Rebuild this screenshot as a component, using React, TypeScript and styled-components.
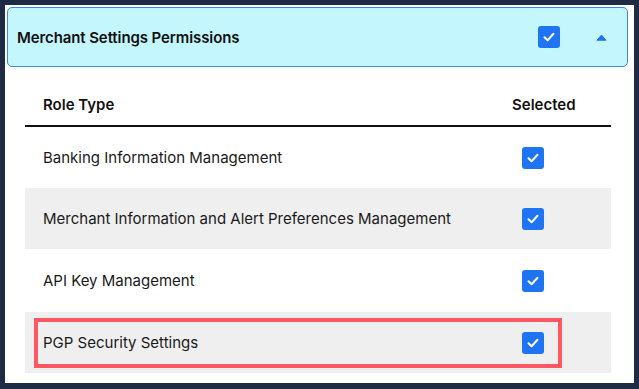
import React from "react";
import styled, { createGlobalStyle } from "styled-components";

const Global = createGlobalStyle`
  html, body { margin: 0; padding: 0; background: #1f2a45; }
  body { font-family: Inter, "Noto Sans", Roboto, sans-serif; color: #111; }
`;

const Frame = styled.div`
  width: 639px;
  height: 389px;
  box-sizing: border-box;
  padding: 5px 5px 6px 5px;
`;

const Panel = styled.div`
  background: #ffffff;
  height: 100%;
  box-sizing: border-box;
  padding: 2px 6px 0 2px;
`;

const Header = styled.div`
  height: 60px;
  box-sizing: border-box;
  background: #c4f6fd;
  border: 1px solid #3f86e8;
  border-radius: 5px;
  display: flex;
  align-items: center;
  padding: 0 20px 0 9px;
`;

const Title = styled.div`
  flex: 1;
  font-size: 15px;
  font-weight: 600;
  letter-spacing: -0.1px;
  color: #111;
`;

const Box = styled.div`
  width: 22px;
  height: 22px;
  border-radius: 3px;
  background: #1f74f4;
  display: flex;
  align-items: center;
  justify-content: center;
`;

const Caret = styled.div`
  margin-left: 36px;
  width: 11px;
  display: flex;
  align-items: center;
`;

const Table = styled.div`
  margin: 0 17px 0 18px;
`;

const HeadRow = styled.div`
  display: flex;
  align-items: center;
  padding: 28px 0 10px 0;
  line-height: 20px;
  border-bottom: 2px solid #111;
  font-size: 15px;
  font-weight: 600;
`;

const RoleHead = styled.div`
  flex: 1;
  padding-left: 18px;
`;

const SelHead = styled.div`
  width: 99px;
`;

const Row = styled.div<{ $shade: boolean; $h: number }>`
  position: relative;
  height: ${(p) => p.$h}px;
  display: flex;
  align-items: center;
  background: ${(p) => (p.$shade ? "#efefef" : "#ffffff")};
  font-size: 15px;
  font-weight: 400;
  color: #1a1a1a;
`;

const RoleCell = styled.div`
  flex: 1;
  padding-left: 18px;
`;

const SelCell = styled.div`
  width: 89px;
  display: flex;
`;

const Highlight = styled.div`
  position: absolute;
  left: 9px;
  top: 6px;
  width: 528px;
  height: 50px;
  box-sizing: border-box;
  border: 4px solid #ff5862;
  pointer-events: none;
`;

const Check = () => (
  <Box>
    <svg width="14" height="14" viewBox="0 0 14 14">
      <path d="M2.5 7.3 L5.6 10.2 L11.5 3.8" fill="none" stroke="#fff" strokeWidth="2" strokeLinecap="round" strokeLinejoin="round" />
    </svg>
  </Box>
);

const rows = [
  { name: "Banking Information Management", h: 61 },
  { name: "Merchant Information and Alert Preferences Management", h: 61 },
  { name: "API Key Management", h: 63 },
  { name: "PGP Security Settings", h: 61, hl: true },
];

export default function App() {
  return (
    <>
      <Global />
      <Frame>
        <Panel>
          <Header>
            <Title>Merchant Settings Permissions</Title>
            <Check />
            <Caret>
              <svg width="11" height="7" viewBox="0 0 11 7">
                <path d="M1 6.2 L5.5 1 L10 6.2 Z" fill="#1f74f4" stroke="#1f74f4" strokeWidth="1" strokeLinejoin="round" />
              </svg>
            </Caret>
          </Header>
          <Table>
            <HeadRow>
              <RoleHead>Role Type</RoleHead>
              <SelHead>Selected</SelHead>
            </HeadRow>
            {rows.map((r, i) => (
              <Row key={r.name} $shade={i % 2 === 1} $h={r.h}>
                <RoleCell>{r.name}</RoleCell>
                <SelCell>
                  <Check />
                </SelCell>
                {r.hl && <Highlight />}
              </Row>
            ))}
          </Table>
        </Panel>
      </Frame>
    </>
  );
}
